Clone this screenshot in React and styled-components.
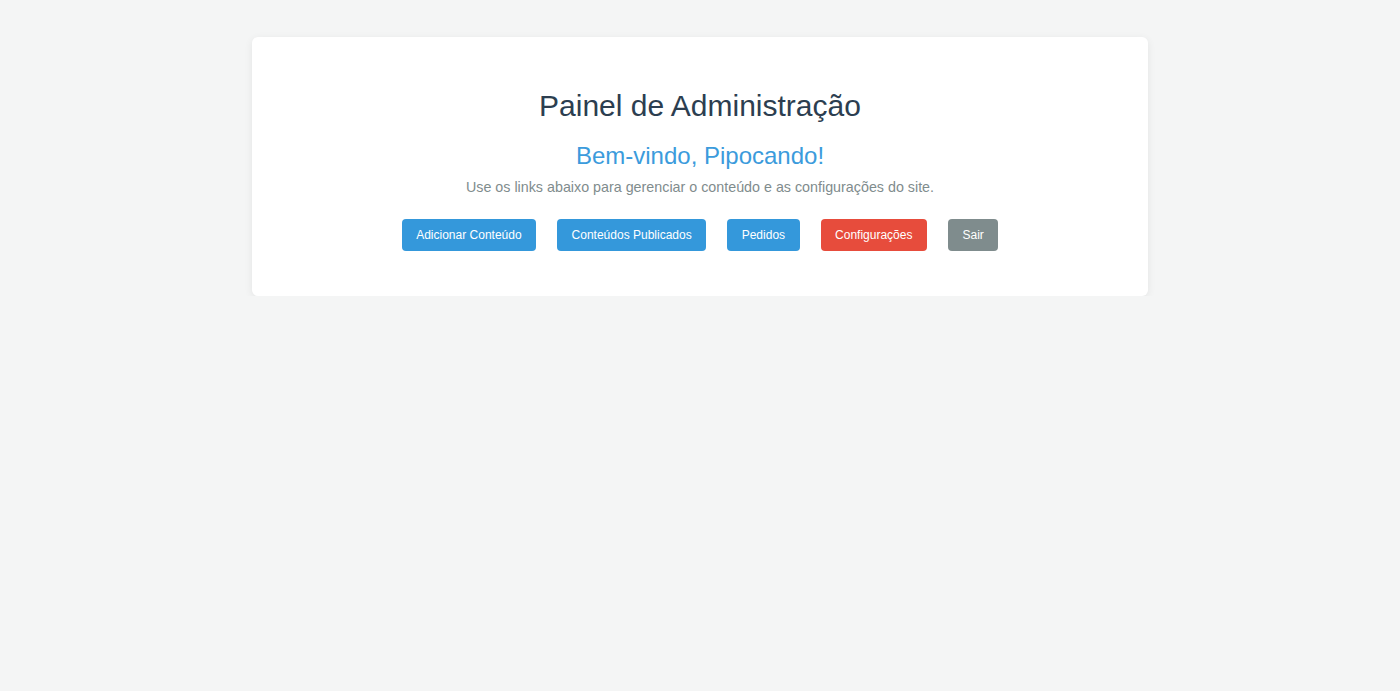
import React from 'react';
import styled, { createGlobalStyle } from 'styled-components';

const GlobalStyle = createGlobalStyle`
    body {
        margin: 0;
        background: #f4f5f5;
        font-family: "Liberation Sans", Arial, sans-serif;
    }
`;

const Panel = styled.div`
    width: 896px;
    box-sizing: border-box;
    margin: 37px auto 0;
    padding: 51px 40px 45px;
    background: #fff;
    border-radius: 6px;
    box-shadow: 0 2px 8px rgba(0, 0, 0, 0.07);
    text-align: center;
`;

const Title = styled.h1`
    margin: 0;
    font-size: 30px;
    line-height: 36px;
    font-weight: normal;
    color: #2c3e50;
`;

const Welcome = styled.h2`
    margin: 17px 0 0;
    font-size: 24px;
    line-height: 30px;
    font-weight: normal;
    color: #3b9bdc;
`;

const Intro = styled.p`
    margin: 6px 0 0;
    font-size: 14.3px;
    line-height: 20px;
    color: #7f8c8d;
`;

const Links = styled.div`
    display: flex;
    justify-content: center;
    gap: 21px;
    margin-top: 22px;
`;

const colors = {
    blue: '#3498db',
    red: '#e74c3c',
    grey: '#7f8c8d'
};

const LinkButton = styled.a`
    display: block;
    padding: 9px 14.5px;
    font-size: 12px;
    line-height: 14px;
    color: #fff;
    text-decoration: none;
    border-radius: 4px;
    background: ${props => colors[props.$variant] || colors.blue};
    cursor: pointer;
`;

const links = [
    { label: 'Adicionar Conteúdo', variant: 'blue' },
    { label: 'Conteúdos Publicados', variant: 'blue' },
    { label: 'Pedidos', variant: 'blue' },
    { label: 'Configurações', variant: 'red' },
    { label: 'Sair', variant: 'grey' }
];

export default function App() {
    return (
        <>
            <GlobalStyle />
            <Panel>
                <Title>Painel de Administração</Title>
                <Welcome>Bem-vindo, Pipocando!</Welcome>
                <Intro>Use os links abaixo para gerenciar o conteúdo e as configurações do site.</Intro>
                <Links>
                    {links.map(link => (
                        <LinkButton key={link.label} $variant={link.variant}>{link.label}</LinkButton>
                    ))}
                </Links>
            </Panel>
        </>
    );
}
